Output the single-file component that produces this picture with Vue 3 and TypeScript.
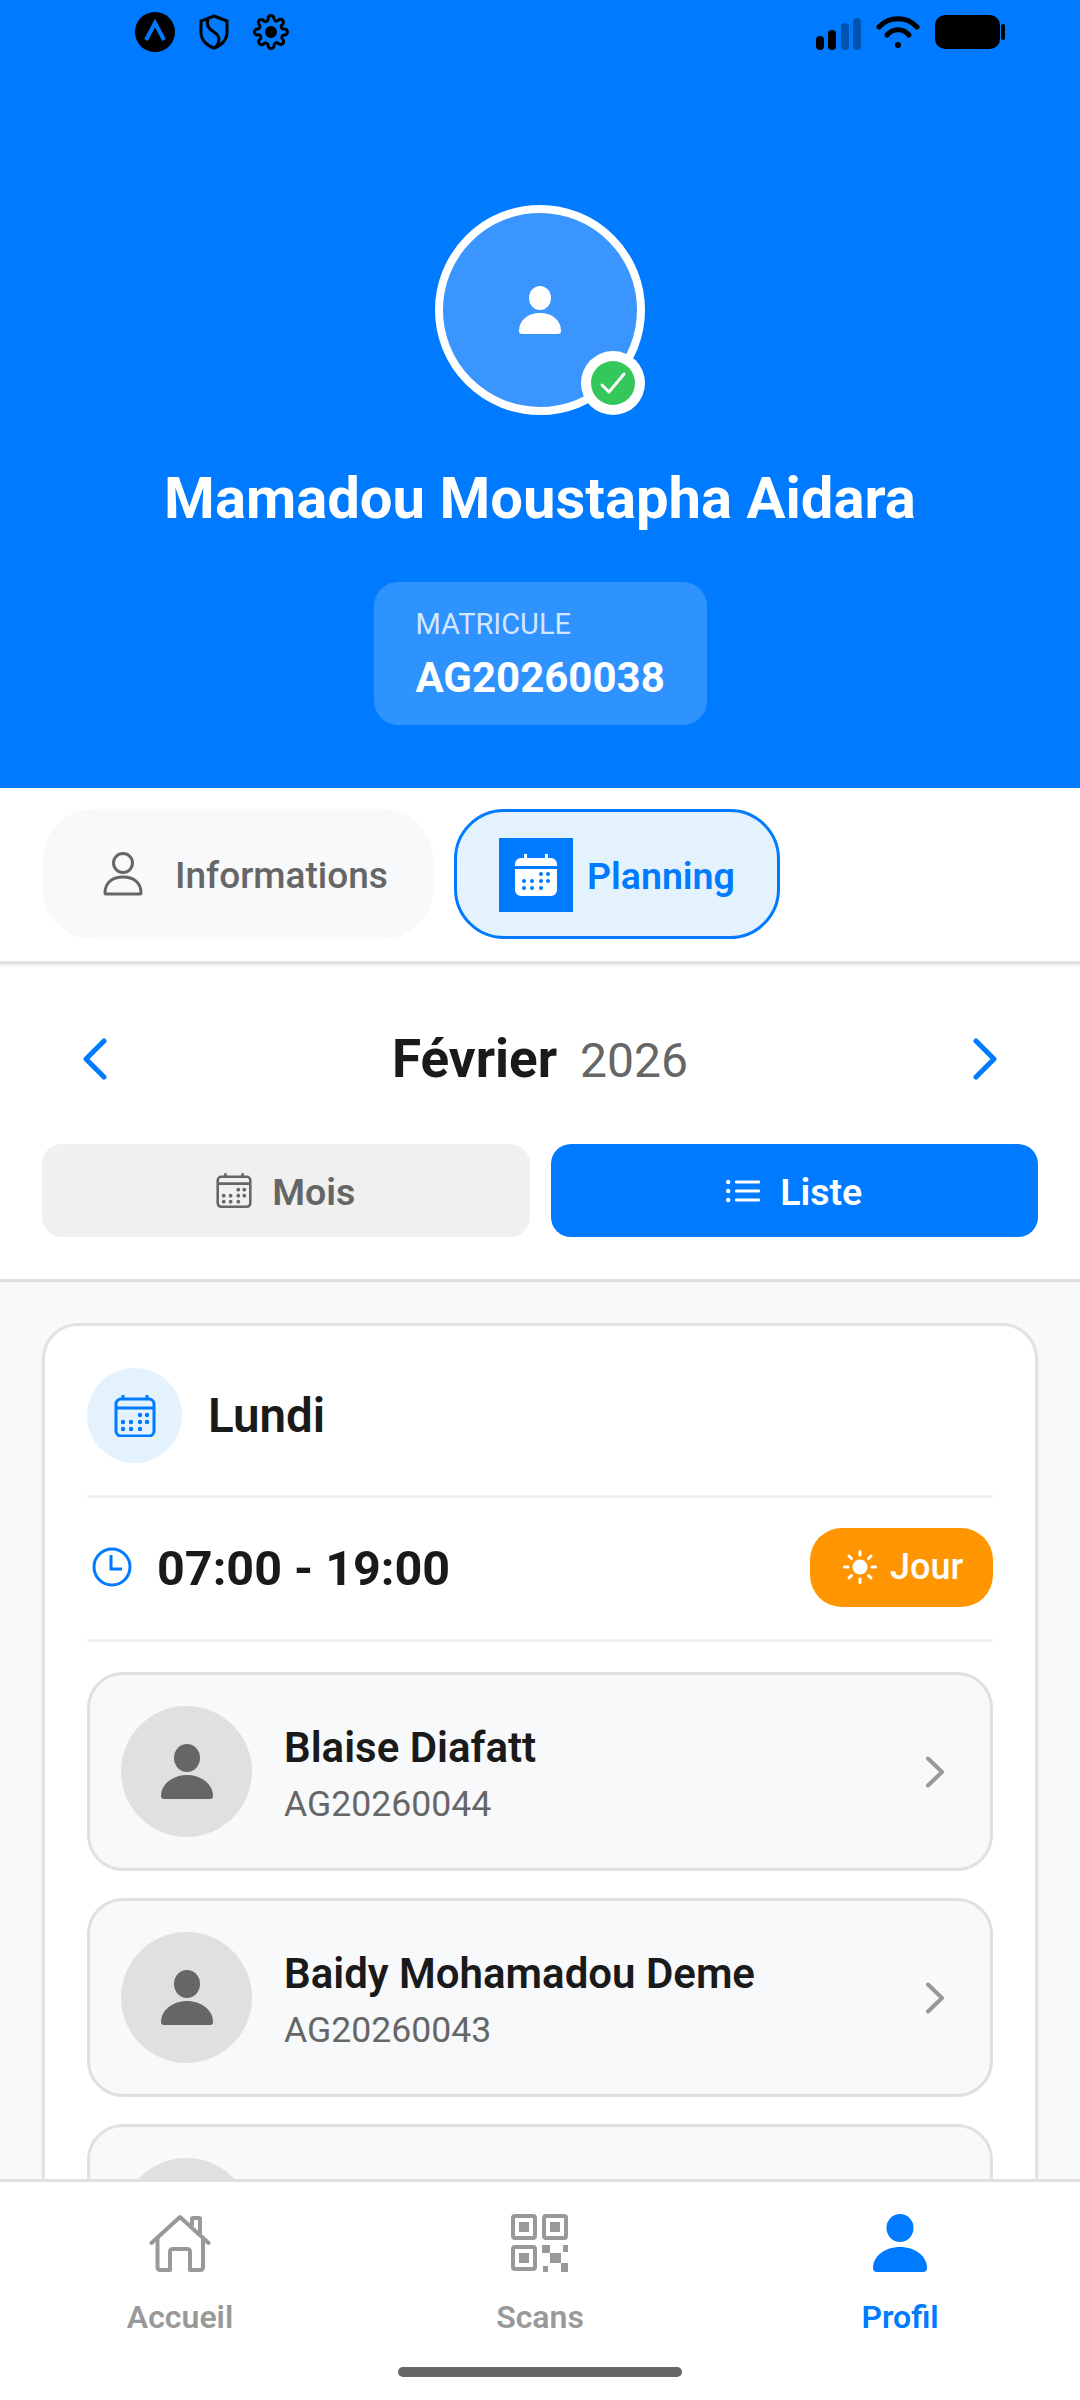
<template>
  <div class="screen">
    <div class="scroll">
      <header class="hero">
        <div class="status">
          <div class="status-left">
            <svg width="40" height="40" viewBox="0 0 40 40"><circle cx="20" cy="20" r="20" fill="#000" /><path d="M11 28 L20 11 L29 28" stroke="#007aff" stroke-width="4" fill="none" /></svg>
            <svg width="30" height="36" viewBox="0 0 30 36" fill="none" stroke="#000" stroke-width="3"><path d="M15 2 L28 7 V18 C28 26 22 32 15 34 C8 32 2 26 2 18 V7 Z" /><path d="M9 5 C7 12 10 15 15 18 C20 21 22 26 17 33" /></svg>
            <svg width="36" height="36" viewBox="0 0 24 24" fill="none" stroke="#000" stroke-width="2"><circle cx="12" cy="12" r="3" fill="#000" /><path d="M19.4 15a1.65 1.65 0 0 0 .33 1.82l.06.06a2 2 0 1 1-2.83 2.83l-.06-.06a1.65 1.65 0 0 0-2.82 1.17V21a2 2 0 1 1-4 0v-.09a1.65 1.65 0 0 0-2.82-1.08l-.06.06a2 2 0 1 1-2.83-2.83l.06-.06A1.65 1.65 0 0 0 3.09 14H3a2 2 0 1 1 0-4h.09a1.65 1.65 0 0 0 1.08-2.82l-.06-.06a2 2 0 1 1 2.83-2.83l.06.06A1.65 1.65 0 0 0 10 3.09V3a2 2 0 1 1 4 0v.09a1.65 1.65 0 0 0 2.82 1.08l.06-.06a2 2 0 1 1 2.83 2.83l-.06.06A1.65 1.65 0 0 0 20.91 10H21a2 2 0 1 1 0 4h-.09a1.65 1.65 0 0 0-1.51 1z" /></svg>
          </div>
          <div class="status-right">
            <div class="signal">
              <span v-for="bar in signalBars" :key="bar.h" class="signal-bar" :class="{ weak: bar.weak }" :style="{ height: bar.h + 'px' }"></span>
            </div>
            <svg width="44" height="34" viewBox="0 0 44 34" fill="none" stroke="#000" stroke-width="5" stroke-linecap="round"><path d="M3 12 C13 1 31 1 41 12" /><path d="M11 20 C17 13 27 13 33 20" /><circle cx="22" cy="30" r="3" fill="#000" stroke="none" /></svg>
            <div class="battery"><div class="battery-body"></div><div class="battery-tip"></div></div>
          </div>
        </div>
        <div class="avatar">
          <svg width="44" height="48" viewBox="0 0 44 48" fill="#fff"><ellipse cx="22" cy="12" rx="11" ry="12" /><path d="M1 45 C1 34 10 27 22 27 C34 27 43 34 43 45 Q43 48 40 48 H4 Q1 48 1 45 Z" /></svg>
          <div class="verified">
            <svg width="44" height="44" viewBox="0 0 44 44"><circle cx="22" cy="22" r="22" fill="#34c759" /><path d="M11 24 L18 31 L33 13" fill="none" stroke="#fff" stroke-width="3" stroke-linecap="round" stroke-linejoin="round" /></svg>
          </div>
        </div>
        <h1 class="name">Mamadou Moustapha Aidara</h1>
        <div class="matricule">
          <span class="matricule-label">MATRICULE</span>
          <span class="matricule-value">AG20260038</span>
        </div>
      </header>

      <div class="tabs">
        <button class="tab">
          <svg width="40" height="44" viewBox="0 0 40 44" fill="none" stroke="#666" stroke-width="3"><ellipse cx="20" cy="11" rx="9.5" ry="9.5" /><path d="M2 41 C2 30 10 25 20 25 C30 25 38 30 38 41 Q38 42 37 42 H3 Q2 42 2 41 Z" /></svg>
          <span class="tab-label">Informations</span>
        </button>
        <button class="tab tab-active">
          <span class="tab-icon">
            <svg width="42" height="42" viewBox="0 0 42 42"><path fill="#fff" d="M9 0 h3 v4 h18 v-4 h3 v4 h3 a6 6 0 0 1 6 6 v2 h-42 v-2 a6 6 0 0 1 6-6 h3 Z M0 15 h42 v21 a6 6 0 0 1-6 6 h-30 a6 6 0 0 1-6-6 Z" /><g fill="#007aff"><circle v-for="d in calendarDots" :key="d.x + '-' + d.y" :cx="d.x" :cy="d.y" r="2" /></g></svg>
          </span>
          <span class="tab-label">Planning</span>
        </button>
      </div>

      <section class="month">
        <div class="month-nav">
          <svg width="24" height="42" viewBox="0 0 24 42" fill="none" stroke="#007aff" stroke-width="5" stroke-linecap="round" stroke-linejoin="round"><path d="M21 3 L3 21 L21 39" /></svg>
          <div class="month-title"><strong>Février</strong><span>2026</span></div>
          <svg width="24" height="42" viewBox="0 0 24 42" fill="none" stroke="#007aff" stroke-width="5" stroke-linecap="round" stroke-linejoin="round"><path d="M3 3 L21 21 L3 39" /></svg>
        </div>
        <div class="view-switch">
          <button class="view-btn">
            <svg width="36" height="37" viewBox="0 0 42 42"><path fill="none" stroke="#666" stroke-width="3" d="M2 9 a4 4 0 0 1 4-4 h30 a4 4 0 0 1 4 4 v27 a4 4 0 0 1-4 4 h-30 a4 4 0 0 1-4-4 Z M2 13 h38 M11 1 v4 M31 1 v4" /><g fill="#666"><circle v-for="d in calendarDots" :key="d.x + '-' + d.y" :cx="d.x" :cy="d.y" r="2.2" /></g></svg>
            <span class="view-label">Mois</span>
          </button>
          <button class="view-btn view-btn-active">
            <svg width="34" height="24" viewBox="0 0 34 24" fill="#fff"><circle cx="2.2" cy="3" r="2.2" /><circle cx="2.2" cy="12" r="2.2" /><circle cx="2.2" cy="21" r="2.2" /><rect x="9" y="1.5" width="25" height="3" rx="1" /><rect x="9" y="10.5" width="25" height="3" rx="1" /><rect x="9" y="19.5" width="25" height="3" rx="1" /></svg>
            <span class="view-label">Liste</span>
          </button>
        </div>
      </section>

      <main class="content">
        <article class="card">
          <div class="day">
            <div class="day-icon">
              <svg width="42" height="42" viewBox="0 0 42 42"><path fill="none" stroke="#007aff" stroke-width="3" d="M2 9 a5 5 0 0 1 5-5 h28 a5 5 0 0 1 5 5 v27 a5 5 0 0 1-5 5 h-28 a5 5 0 0 1-5-5 Z M2 13 h38 M9 0 v4 M33 0 v4" /><g fill="#007aff"><circle v-for="d in calendarDots" :key="d.x + '-' + d.y" :cx="d.x" :cy="d.y" r="2.2" /></g></svg>
            </div>
            <span class="day-name">Lundi</span>
          </div>
          <div class="shift">
            <div class="shift-time">
              <svg width="40" height="40" viewBox="0 0 40 40" fill="none" stroke="#007aff" stroke-width="3"><circle cx="20" cy="20" r="18" /><path d="M19 8 V22 H30" /></svg>
              <span class="time-label">07:00 - 19:00</span>
            </div>
            <div class="shift-badge">
              <svg width="34" height="34" viewBox="0 0 34 34" fill="#fff"><circle cx="17" cy="17" r="7.5" /><g stroke="#fff" stroke-width="3" stroke-linecap="round"><path d="M17 1.5 V5 M17 29 V32.5 M1.5 17 H5 M29 17 H32.5 M6 6 L8.5 8.5 M25.5 25.5 L28 28 M6 28 L8.5 25.5 M25.5 8.5 L28 6" /></g></svg>
              <span>Jour</span>
            </div>
          </div>
          <div class="agents">
            <div v-for="(agent, i) in agents" :key="i" class="agent">
              <div class="agent-avatar">
                <svg width="52" height="56" viewBox="0 0 52 56" fill="#666"><ellipse cx="26" cy="14" rx="13" ry="14" /><path d="M0 52 C0 40 12 31 26 31 C40 31 52 40 52 52 Q52 55 49 55 H3 Q0 55 0 52 Z" /></svg>
              </div>
              <div v-if="agent.name" class="agent-text">
                <span class="agent-name">{{ agent.name }}</span>
                <span class="agent-id">{{ agent.id }}</span>
              </div>
              <svg class="agent-chevron" width="20" height="32" viewBox="0 0 20 32" fill="none" stroke="#999" stroke-width="4" stroke-linecap="round" stroke-linejoin="round"><path d="M3 2.5 L17 16 L3 29.5" /></svg>
            </div>
          </div>
        </article>
      </main>
    </div>

    <nav class="bottom-nav">
      <div class="nav-items">
        <div class="nav-item">
          <svg width="62" height="58" viewBox="0 0 62 58" fill="none" stroke="#999" stroke-width="4" stroke-linecap="round" stroke-linejoin="round"><path d="M2.5 29 L31 3 L59.5 29" /><path d="M8.5 24 V53 Q8.5 56 11.5 56 H21 V38 Q21 35 24 35 H38 Q41 35 41 38 V56 H51 Q54 56 54 53 V24" /><path d="M43 11 V5 Q43 4 44 4 H50 Q51 4 51 5 V19" /></svg>
          <span>Accueil</span>
        </div>
        <div class="nav-item">
          <svg width="58" height="58" viewBox="0 0 58 58" fill="none" stroke="#999" stroke-width="4"><rect x="2" y="2" width="22" height="22" rx="2" /><rect x="33" y="2" width="22" height="22" rx="2" /><rect x="2" y="33" width="22" height="22" rx="2" /><g fill="#999" stroke="none"><rect x="8" y="8" width="10" height="10" /><rect x="39" y="8" width="10" height="10" /><rect x="8" y="39" width="10" height="10" /><rect x="31" y="31" width="8" height="8" /><rect x="52" y="31" width="5" height="7" /><rect x="39" y="39" width="11" height="10" /><rect x="32" y="52" width="5" height="6" /><rect x="50" y="49" width="7" height="9" /></g></svg>
          <span>Scans</span>
        </div>
        <div class="nav-item nav-item-active">
          <svg width="54" height="58" viewBox="0 0 54 58" fill="#007aff"><ellipse cx="27" cy="14" rx="13.5" ry="14" /><path d="M0 54 C0 42 12 33 27 33 C42 33 54 42 54 54 Q54 58 50 58 H4 Q0 58 0 54 Z" /></svg>
          <span>Profil</span>
        </div>
      </div>
      <div class="home-indicator"></div>
    </nav>
  </div>
</template>

<script setup lang="ts">
interface Agent {
  name: string
  id: string
}

const signalBars = [
  { h: 14, weak: false },
  { h: 20, weak: false },
  { h: 27, weak: true },
  { h: 32, weak: true },
]

const calendarDots = [
  { x: 26, y: 20 }, { x: 33, y: 20 },
  { x: 9, y: 27 }, { x: 17, y: 27 }, { x: 26, y: 27 }, { x: 33, y: 27 },
  { x: 9, y: 34 }, { x: 17, y: 34 }, { x: 26, y: 34 },
]

// the third row is cut by the bottom nav, only its avatar shows
const agents: Agent[] = [
  { name: 'Blaise Diafatt', id: 'AG20260044' },
  { name: 'Baidy Mohamadou Deme', id: 'AG20260043' },
  { name: '', id: '' },
]
</script>

<style>
html, body {
  margin: 0;
  background: #fff;
}
</style>

<style scoped>
.screen {
  width: 1080px;
  height: 2400px;
  display: flex;
  flex-direction: column;
  font-family: Roboto, sans-serif;
  background: #f8f9fa;
  overflow: hidden;
}

.scroll {
  height: 2179px;
  overflow: hidden;
  flex-shrink: 0;
}

.hero {
  height: 788px;
  box-sizing: border-box;
  background: #007aff;
  display: flex;
  flex-direction: column;
  align-items: center;
  color: #fff;
}

.status {
  width: 100%;
  box-sizing: border-box;
  height: 62px;
  padding: 12px 75px 0 135px;
  display: flex;
  justify-content: space-between;
}

.status-left {
  display: flex;
  align-items: center;
  gap: 24px;
  height: 40px;
}

.status-right {
  display: flex;
  align-items: center;
  gap: 15px;
  height: 40px;
}

.signal {
  display: flex;
  align-items: flex-end;
  gap: 4.5px;
  height: 32px;
  margin-top: 3px;
}

.signal-bar {
  width: 8px;
  border-radius: 4px;
  background: #000;
}

.signal-bar.weak {
  background: rgba(0, 0, 0, 0.3);
}

.battery {
  display: flex;
  align-items: center;
  gap: 1px;
}

.battery-body {
  width: 65px;
  height: 34px;
  border-radius: 10px;
  background: #000;
}

.battery-tip {
  width: 4px;
  height: 16px;
  border-radius: 2px;
  background: #000;
}

.avatar {
  margin-top: 143px;
  width: 210px;
  height: 210px;
  box-sizing: border-box;
  border: 8px solid #fff;
  border-radius: 50%;
  background: #3a95ff;
  display: flex;
  align-items: center;
  justify-content: center;
  position: relative;
}

.verified {
  position: absolute;
  right: -8px;
  bottom: -8px;
  width: 64px;
  height: 64px;
  border-radius: 50%;
  background: #fff;
  display: flex;
  align-items: center;
  justify-content: center;
}

.name {
  margin: 50px 0 0;
  font-size: 58px;
  line-height: 66px;
  font-weight: 700;
}

.matricule {
  margin-top: 51px;
  width: 333px;
  height: 143px;
  box-sizing: border-box;
  padding: 25px 0 0 42px;
  border-radius: 24px;
  background: #2e92ff;
  display: flex;
  flex-direction: column;
}

.matricule-label {
  font-size: 29px;
  line-height: 34px;
  color: rgba(255, 255, 255, 0.8);
}

.matricule-value {
  margin-top: 13px;
  font-size: 42px;
  line-height: 48px;
  font-weight: 700;
}

.tabs {
  height: 176px;
  box-sizing: border-box;
  padding-top: 21px;
  background: #fff;
  display: flex;
  gap: 21px;
  padding-left: 43px;
  border-bottom: 3px solid #e0e0e0;
  box-shadow: 0 2px 3px rgba(0, 0, 0, 0.08);
  position: relative;
}

.tab {
  height: 130px;
  width: 390px;
  box-sizing: border-box;
  border: none;
  border-radius: 50px;
  background: #f8f9fa;
  padding: 0 0 0 60px;
  display: flex;
  align-items: center;
  gap: 32px;
  font-family: inherit;
  font-size: 37px;
  font-weight: 500;
  color: #666;
}

.tab-label {
  padding-top: 3px;
}

.tab-active {
  width: 326px;
  padding-left: 42px;
  gap: 14px;
  border: 3px solid #007aff;
  background: #e3f2fd;
  font-size: 37.5px;
  color: #007aff;
  font-weight: 600;
}

.tab-icon {
  width: 74px;
  height: 74px;
  margin-top: 2px;
  background: #007aff;
  display: flex;
  align-items: center;
  justify-content: center;
}

.month {
  height: 318px;
  box-sizing: border-box;
  background: #fff;
  border-bottom: 3px solid #e0e0e0;
  padding: 0 42px;
}

.month-nav {
  height: 180px;
  box-sizing: border-box;
  padding: 9px 41px 0;
  display: flex;
  align-items: center;
  justify-content: space-between;
}

.month-title {
  display: flex;
  align-items: baseline;
  gap: 23px;
}

.month-title strong {
  font-size: 53px;
  font-weight: 700;
  color: #1a1a1a;
}

.month-title span {
  font-size: 48px;
  color: #666;
}

.view-switch {
  display: flex;
  gap: 21px;
}

.view-btn {
  flex: 1;
  height: 93px;
  border: none;
  border-radius: 20px;
  background: #f0f0f0;
  display: flex;
  align-items: center;
  justify-content: center;
  gap: 20px;
  font-family: inherit;
  font-size: 37.5px;
  font-weight: 600;
  color: #666;
}

.view-label {
  padding-top: 2px;
}

.view-btn-active {
  background: #007aff;
  color: #fff;
}

.content {
  padding: 41px 42px 0;
}

.card {
  box-sizing: border-box;
  padding: 42px 42px 0;
  background: #fff;
  border: 3px solid #e2e2e2;
  border-radius: 36px;
  box-shadow: 0 1px 3px rgba(0, 0, 0, 0.06);
}

.day {
  display: flex;
  align-items: center;
  gap: 26px;
  padding-bottom: 32px;
  border-bottom: 3px solid #f0f0f0;
}

.day-icon {
  width: 95px;
  height: 95px;
  border-radius: 50%;
  background: #e3f2fd;
  display: flex;
  align-items: center;
  justify-content: center;
}

.day-name {
  font-size: 47.5px;
  font-weight: 600;
  color: #1a1a1a;
}

.shift {
  height: 144px;
  box-sizing: border-box;
  padding-bottom: 3px;
  display: flex;
  align-items: center;
  justify-content: space-between;
  border-bottom: 3px solid #f0f0f0;
}

.shift-time {
  display: flex;
  align-items: center;
  gap: 25px;
  padding-left: 5px;
  font-size: 48.5px;
  font-weight: 700;
  color: #1a1a1a;
}

.time-label {
  padding-top: 2px;
}

.shift-badge {
  width: 183px;
  height: 79px;
  box-sizing: border-box;
  padding-left: 33px;
  border-radius: 32px;
  background: #ff9500;
  display: flex;
  align-items: center;
  gap: 13px;
  font-size: 36px;
  font-weight: 500;
  color: #fff;
}

.agents {
  padding-top: 30px;
  display: flex;
  flex-direction: column;
  gap: 27px;
}

.agent {
  height: 199px;
  box-sizing: border-box;
  padding: 0 45px 0 31px;
  display: flex;
  align-items: center;
  background: #f8f9fa;
  border: 3px solid #e0e0e0;
  border-radius: 36px;
}

.agent-avatar {
  width: 131px;
  height: 131px;
  flex-shrink: 0;
  border-radius: 50%;
  background: #e0e0e0;
  display: flex;
  align-items: center;
  justify-content: center;
}

.agent-text {
  flex: 1;
  margin-left: 32px;
  padding-top: 4px;
  display: flex;
  flex-direction: column;
  gap: 10px;
}

.agent-chevron {
  margin-left: auto;
}

.agent-name {
  font-size: 42px;
  line-height: 50px;
  font-weight: 600;
  color: #1a1a1a;
}

.agent-id {
  font-size: 35.6px;
  line-height: 42px;
  color: #666;
}

.bottom-nav {
  flex: 1;
  background: #fff;
  border-top: 3px solid #e0e0e0;
  display: flex;
  flex-direction: column;
  align-items: center;
  position: relative;
}

.nav-items {
  width: 100%;
  display: flex;
  padding-top: 32px;
}

.nav-item {
  flex: 1;
  display: flex;
  flex-direction: column;
  align-items: center;
  gap: 26px;
  font-size: 32px;
  line-height: 38px;
  font-weight: 600;
  color: #999;
}

.nav-item-active {
  color: #007aff;
}

.home-indicator {
  margin-top: 31px;
  width: 284px;
  height: 10px;
  border-radius: 5px;
  background: #666;
}
</style>
